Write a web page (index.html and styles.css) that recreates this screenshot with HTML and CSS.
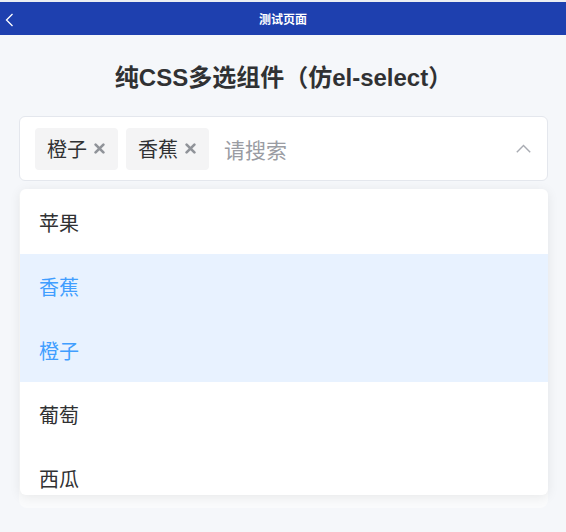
FILE: index.html
```html
<!DOCTYPE html>
<html lang="zh-CN">
<head>
<meta charset="utf-8">
<title>测试页面</title>
<link rel="stylesheet" href="styles.css">
</head>
<body>
<header class="topbar">
  <svg class="back" width="9" height="14" viewBox="0 0 9 14"><path d="M7.5 1 L1.5 7 L7.5 13" fill="none" stroke="#fff" stroke-width="1.3"/></svg>
  <span class="topbar-title">测试页面</span>
</header>
<main class="main">
  <h1 class="heading">纯CSS多选组件（仿el-select）</h1>
  <div class="select-wrap">
    <div class="select">
      <span class="tag">橙子<svg class="tag-close" width="11" height="11" viewBox="0 0 11 11"><path d="M1.6 1.6 L9.4 9.4 M9.4 1.6 L1.6 9.4" stroke="#909399" stroke-width="2.6" stroke-linecap="round"/></svg></span>
      <span class="tag">香蕉<svg class="tag-close" width="11" height="11" viewBox="0 0 11 11"><path d="M1.6 1.6 L9.4 9.4 M9.4 1.6 L1.6 9.4" stroke="#909399" stroke-width="2.6" stroke-linecap="round"/></svg></span>
      <span class="placeholder">请搜索</span>
      <svg class="arrow" width="15" height="9" viewBox="0 0 15 9"><path d="M0.8 8.2 L7.5 1.5 L14.2 8.2" fill="none" stroke="#a8abb2" stroke-width="1.4"/></svg>
    </div>
    <div class="under-card"></div>
    <ul class="dropdown">
      <li class="option">苹果</li>
      <li class="option selected">香蕉</li>
      <li class="option selected">橙子</li>
      <li class="option">葡萄</li>
      <li class="option">西瓜</li>
    </ul>
  </div>
</main>
</body>
</html>
```
FILE: styles.css
```css
html, body {
  margin: 0;
  padding: 0;
}
body {
  background: #f5f7fa;
  font-family: "Liberation Sans", "Noto Sans CJK SC", sans-serif;
  color: #303133;
  border-top: 2px solid #eceef2;
}
.topbar {
  position: relative;
  height: 33px;
  background: #1e40af;
  display: flex;
  align-items: center;
  justify-content: center;
}
.back {
  position: absolute;
  left: 5px;
  top: 11px;
}
.topbar-title {
  color: #fff;
  font-size: 12px;
  font-weight: bold;
  font-family: "Noto Sans CJK SC", sans-serif;
}
.main {
  padding: 0 18px 0 19px;
}
.heading {
  margin: 27px 0 22px;
  font-size: 24px;
  line-height: 32px;
  font-weight: bold;
  text-align: center;
  color: #303133;
}
.select-wrap {
  position: relative;
}
.select {
  box-sizing: border-box;
  height: 65px;
  background: #fff;
  border: 1px solid #e4e7ed;
  border-radius: 6px;
  padding: 0 16px 0 15px;
  display: flex;
  align-items: center;
  gap: 8px;
}
.tag {
  height: 42px;
  box-sizing: border-box;
  padding: 0 13px 0 12px;
  border-radius: 4px;
  background: #f4f4f5;
  display: flex;
  align-items: center;
  gap: 7px;
  font-family: "Noto Sans CJK SC", sans-serif;
  font-size: 20px;
  color: #303133;
}
.tag-close {
  display: block;
}
.placeholder {
  margin-left: 7px;
  font-family: "Noto Sans CJK SC", sans-serif;
  font-size: 21px;
  color: #9a9ca3;
}
.arrow {
  margin-left: auto;
  display: block;
}
.under-card {
  margin-top: 8px;
  height: 319px;
  background: #fafbfc;
  border-radius: 8px;
}
.dropdown {
  position: absolute;
  top: 73px;
  left: 1px;
  right: 0;
  height: 306px;
  margin: 0;
  padding: 1px 0 0;
  list-style: none;
  background: #fff;
  border-radius: 6px;
  box-shadow: 0 2px 12px rgba(0, 0, 0, 0.08);
  overflow: hidden;
  box-sizing: border-box;
}
.option {
  height: 64px;
  padding-left: 19px;
  display: flex;
  align-items: center;
  font-family: "Noto Sans CJK SC", sans-serif;
  font-size: 20px;
  color: #303133;
}
.option.selected {
  background: #e8f2ff;
  color: #409eff;
}
```
